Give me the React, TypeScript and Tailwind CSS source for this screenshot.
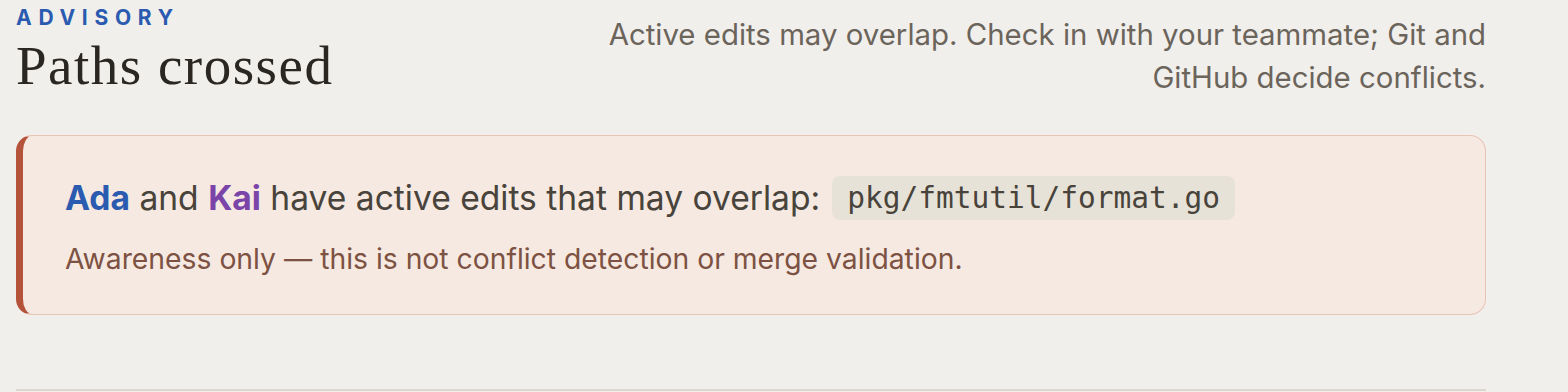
export default function App() {
  return (
    <div className="min-h-screen bg-[#f1efeb] pl-4 pt-[6px]" style={{ fontFamily: 'Inter, "Noto Sans", sans-serif' }}>
      <div className="w-[1470px]">
        {/* header */}
        <div className="flex items-start justify-between">
          <div>
            <div className="text-[21px] font-bold leading-[24px] tracking-[0.32em] text-[#2a5bb0]">ADVISORY</div>
            <h1
              className="mt-[6px] text-[55px] leading-[60px] tracking-[1.5px] text-[#2a2622]"
              style={{ fontFamily: '"Liberation Serif", serif' }}
            >
              Paths crossed
            </h1>
          </div>
          <p className="mt-[7px] max-w-[900px] text-right text-[29.4px] leading-[43px] text-[#6b645b]">
            Active edits may overlap. Check in with your teammate; Git and GitHub decide conflicts.
          </p>
        </div>

        {/* overlap notice */}
        <div className="mt-[36px] h-[180px] rounded-2xl border border-l-[7px] border-[#e8c4b5] border-l-[#b5533a] bg-[#f6e9e1] pl-[42px] pt-[40px]">
          <div className="flex items-center gap-[12px] text-[33.6px] leading-[44px] text-[#48433b]">
            <span>
              <span className="font-bold text-[#2a5bb0]">Ada</span> and{' '}
              <span className="font-bold text-[#7b44a9]">Kai</span> have active edits that may overlap:
            </span>
            <code
              className="rounded-lg bg-[#e7e2d8] px-[15px] text-[29.5px] leading-[44px] text-[#48433b]"
              style={{ fontFamily: '"DejaVu Sans Mono", "Liberation Mono", monospace' }}
            >
              pkg/fmtutil/format.go
            </code>
          </div>
          <p className="mt-[21px] text-[28.3px] leading-[36px] text-[#7d5243]">
            Awareness only — this is not conflict detection or merge validation.
          </p>
        </div>

        <div className="mt-[74px] border-t-2 border-[#dcd8cf]" />
      </div>
    </div>
  );
}
